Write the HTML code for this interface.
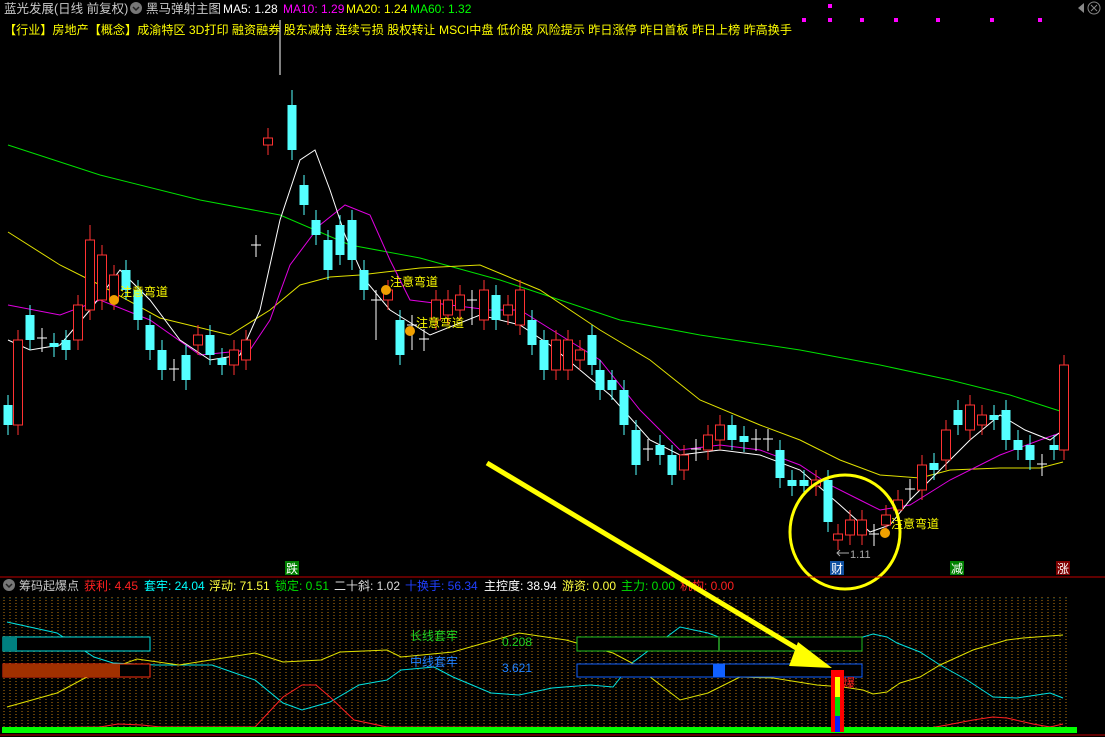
<!DOCTYPE html>
<html><head><meta charset="utf-8"><style>
body{margin:0;background:#000;width:1105px;height:737px;overflow:hidden;font-family:"Liberation Sans","Noto Sans CJK SC",sans-serif}
svg{display:block}
text{font-family:"Liberation Sans","Noto Sans CJK SC",sans-serif}
</style></head><body>
<svg id="s" width="1105" height="737" xmlns="http://www.w3.org/2000/svg">
<defs><clipPath id="cp"><rect x="0" y="597" width="1080" height="131"/></clipPath></defs>
<rect width="1105" height="737" fill="#000"/>
<text x="4" y="13" font-size="12.5" fill="#c8c8c8">蓝光发展(日线 前复权)</text>
<circle cx="136" cy="8" r="6" fill="#777"/><path d="M133 7l3 3 3-3" stroke="#222" stroke-width="1.5" fill="none"/>
<text x="146" y="13" font-size="12.5" fill="#c8c8c8">黑马弹射主图</text>
<text x="223" y="13" font-size="12" fill="#fff">MA5: 1.28</text>
<text x="283" y="13" font-size="12" fill="#ff00ff">MA10: 1.29</text>
<text x="346" y="13" font-size="12" fill="#ffff00">MA20: 1.24</text>
<text x="410" y="13" font-size="12" fill="#00ff00">MA60: 1.32</text>
<text x="4" y="34" font-size="12" fill="#ffff00" textLength="788" lengthAdjust="spacingAndGlyphs">【行业】房地产【概念】成渝特区 3D打印 融资融券 股东减持 连续亏损 股权转让 MSCI中盘 低价股 风险提示 昨日涨停 昨日首板 昨日上榜 昨高换手</text>
<g fill="#ff00ff"><rect x="802" y="18" width="4" height="4"/><rect x="828" y="18" width="4" height="4"/><rect x="860" y="18" width="4" height="4"/><rect x="894" y="18" width="4" height="4"/><rect x="936" y="18" width="4" height="4"/><rect x="990" y="18" width="4" height="4"/><rect x="1038" y="18" width="4" height="4"/><rect x="828" y="4" width="4" height="4"/></g>
<path d="M1078 8l6-5v10z" fill="#888"/><circle cx="1094" cy="8" r="6" fill="none" stroke="#888"/><path d="M1091 5l6 6M1097 5l-6 6" stroke="#888"/>
<polyline fill="none" stroke="#00e000" stroke-width="1" points="8,145 100,175 200,200 280,215 350,245 420,258 500,280 560,300 620,320 700,335 800,350 880,365 950,380 1010,395 1063,412"/>
<polyline fill="none" stroke="#e0e000" stroke-width="1" points="8,232 60,265 100,285 160,318 230,335 270,310 300,285 330,277 360,275 420,268 480,265 540,290 600,330 650,360 700,400 760,425 800,440 840,460 880,475 920,478 950,470 1000,468 1040,468 1063,462"/>
<polyline fill="none" stroke="#e000e0" stroke-width="1" points="8,305 60,315 100,300 150,320 200,355 250,350 270,320 290,265 320,225 345,205 370,215 390,260 410,300 450,305 490,310 520,310 560,335 600,360 640,410 680,450 720,445 760,450 800,465 830,485 860,500 880,510 910,505 950,480 1000,455 1040,440 1063,432"/>
<polyline fill="none" stroke="#fff" stroke-width="1" points="8,340 30,350 60,345 90,310 120,270 150,300 180,340 210,360 240,355 260,310 280,220 300,160 315,150 330,190 345,235 365,280 390,310 430,335 480,315 520,325 550,345 580,370 610,395 650,440 680,455 720,450 760,455 800,470 840,505 870,532 890,525 910,500 940,470 970,440 1000,415 1025,430 1050,440 1063,430"/>
<g id="candles"></g>
<g font-size="12" fill="#ffff00">
<circle cx="114" cy="300" r="5" fill="#f0a000"/><text x="120" y="296">注意弯道</text>
<circle cx="386" cy="290" r="5" fill="#f0a000"/><text x="390" y="286">注意弯道</text>
<circle cx="410" cy="331" r="5" fill="#f0a000"/><text x="416" y="327">注意弯道</text>
<circle cx="885" cy="533" r="5" fill="#f0a000"/><text x="891" y="528">注意弯道</text>
</g>
<path d="M837 553h12" stroke="#aaa"/><path d="M840 550l-3 3 3 3" stroke="#aaa" fill="none"/><text x="850" y="558" font-size="11" fill="#aaa">1.11</text>
<ellipse cx="845" cy="532" rx="55" ry="57" fill="none" stroke="#ffff00" stroke-width="3"/>
<rect x="285" y="561" width="14" height="14" fill="#008000"/><text x="286" y="573" font-size="12" fill="#fff">跌</text>
<rect x="830" y="561" width="14" height="14" fill="#1050a0"/><text x="831" y="573" font-size="12" fill="#fff">财</text>
<rect x="950" y="561" width="14" height="14" fill="#008000"/><text x="951" y="573" font-size="12" fill="#fff">减</text>
<rect x="1056" y="561" width="14" height="14" fill="#800000"/><text x="1057" y="573" font-size="12" fill="#fff">涨</text>
<line x1="0" y1="577" x2="1105" y2="577" stroke="#c00000"/>
<line x1="0" y1="735" x2="1105" y2="735" stroke="#c00000"/>
<circle cx="9" cy="585" r="6" fill="#777"/><path d="M6 584l3 3 3-3" stroke="#222" stroke-width="1.5" fill="none"/>
<g font-size="12">
<text x="19" y="590" fill="#c8c8c8">筹码起爆点</text>
<text x="84" y="590" fill="#ff2020">获利: 4.45</text>
<text x="144" y="590" fill="#00ffff">套牢: 24.04</text>
<text x="209" y="590" fill="#ffff40">浮动: 71.51</text>
<text x="275" y="590" fill="#00e000">锁定: 0.51</text>
<text x="334" y="590" fill="#ddd">二十斜: 1.02</text>
<text x="405" y="590" fill="#2040ff">十换手: 56.34</text>
<text x="484" y="590" fill="#fff">主控度: 38.94</text>
<text x="562" y="590" fill="#ffff40">游资: 0.00</text>
<text x="621" y="590" fill="#00e000">主力: 0.00</text>
<text x="680" y="590" fill="#ff2020">机构: 0.00</text>
</g>
<g id="bars" clip-path="url(#cp)"></g>
<polyline fill="none" stroke="#00e0e0" points="7,622 57,633 94,657 113,663 156,665 212,665 255,680 283,703 302,710 330,702 359,685 387,680 401,670 434,667 453,677 491,693 519,695 552,688 590,685 613,687 632,663 680,627 708,633 740,645 863,637 873,634 887,637 897,643 920,652 940,665 967,680 993,697 1017,698 1050,693 1063,698"/>
<polyline fill="none" stroke="#e0e000" points="7,707 57,693 85,678 137,659 179,665 255,653 283,662 321,660 340,652 387,650 401,657 453,652 519,633 566,640 613,653 632,663 680,700 708,693 740,677 773,678 817,685 843,687 863,690 873,694 887,692 900,683 920,677 940,665 973,650 1007,640 1023,638 1063,635"/>
<polyline fill="none" stroke="#ff2020" points="7,728 100,727 118,724 142,725 160,727 255,727 283,697 302,685 316,685 330,697 354,720 387,727 930,728 947,725 973,720 993,717 1007,718 1033,724 1050,727 1063,724"/>
<rect x="2" y="727" width="1075" height="6" fill="#00ff00"/>
<rect x="3" y="637" width="147" height="14" fill="#000" stroke="#00e0e0"/><rect x="3" y="637" width="14" height="14" fill="#008080"/>
<rect x="3" y="664" width="147" height="13" fill="#000" stroke="#ff3010"/><rect x="3" y="664" width="117" height="13" fill="#a03000"/>
<rect x="577" y="637" width="285" height="14" fill="#000" stroke="#20c020"/><rect x="718" y="637" width="2" height="14" fill="#208020"/>
<rect x="577" y="664" width="285" height="13" fill="#000" stroke="#1060ff"/><rect x="713" y="664" width="12" height="13" fill="#1060ff"/>
<text x="410" y="640" font-size="12" fill="#20d020">长线套牢</text><text x="502" y="646" font-size="12" fill="#20d020">0.208</text>
<text x="410" y="666" font-size="12" fill="#2080ff">中线套牢</text><text x="502" y="672" font-size="12" fill="#2080ff">3.621</text>
<rect x="831" y="670" width="13" height="62" fill="#ff0000"/><rect x="835" y="677" width="5" height="20" fill="#ffff00"/><rect x="835" y="697" width="5" height="20" fill="#00e000"/><rect x="835" y="716" width="5" height="16" fill="#0020ff"/>
<text x="843" y="687" font-size="12" fill="#ff2020">爆</text>
<line x1="487" y1="463" x2="808" y2="655" stroke="#ffff00" stroke-width="5"/>
<path d="M798 642l34 26-43 -2z" fill="#ffff00"/>
<line x1="280" y1="20" x2="280" y2="75" stroke="#fff"/>
</svg>
<script>
var C=[[8,405,425,'c'],[18,340,425,'r',330],[30,315,340,'c'],[42,338,342,'w'],[54,343,347,'c'],[66,340,350,'c'],[78,305,340,'r'],[90,240,310,'r',225],[102,255,300,'r'],[114,275,300,'r'],[126,270,290,'c'],[138,290,320,'c'],[150,325,350,'c'],[162,350,370,'c'],[174,369,371,'w'],[186,355,380,'c'],[198,335,345,'r'],[210,335,355,'c'],[222,358,365,'c'],[234,350,365,'r'],[246,340,360,'r'],[256,245,247,'w'],[268,138,145,'r'],[292,105,150,'c',90],[304,185,205,'c'],[316,220,235,'c'],[328,240,270,'c'],[340,225,255,'c'],[352,220,260,'c'],[364,270,290,'c'],[376,300,330,'w'],[388,290,300,'r'],[400,320,355,'c'],[412,325,340,'w'],[424,339,341,'w'],[436,300,320,'r'],[448,300,315,'r'],[460,295,310,'r'],[472,300,315,'w'],[484,290,320,'r'],[496,295,320,'c'],[508,305,315,'r'],[520,290,325,'r'],[532,320,345,'c'],[544,340,370,'c'],[556,340,370,'r'],[568,340,370,'r'],[580,350,360,'r'],[592,335,365,'c'],[600,370,390,'c'],[612,380,390,'c'],[624,390,425,'c'],[636,430,465,'c'],[648,449,451,'w'],[660,445,455,'c'],[672,455,475,'c'],[684,455,470,'r'],[696,449,451,'w'],[708,435,450,'r'],[720,425,440,'r'],[732,425,440,'c'],[744,436,442,'c'],[756,439,441,'w'],[768,439,441,'w'],[780,450,478,'c'],[792,480,486,'c'],[804,480,486,'c'],[816,480,486,'r'],[828,480,522,'c'],[838,534,540,'r'],[850,520,535,'r'],[862,520,535,'r'],[874,534,536,'w'],[886,515,525,'r'],[898,500,510,'r'],[910,489,491,'w'],[922,465,490,'r'],[934,463,470,'c'],[946,430,460,'r'],[958,410,425,'c'],[970,405,430,'r'],[982,415,425,'r'],[994,415,420,'c'],[1006,410,440,'c'],[1018,440,450,'c'],[1030,445,460,'c'],[1042,464,466,'w'],[1054,445,450,'c'],[1064,365,450,'r']];
var g=document.getElementById('candles'),h='';
C.forEach(function(c){var x=c[0],t=c[1],b=c[2],k=c[3],hi=c[4]||t-10,lo=b+10;
var col=k=='c'?'#54ffff':k=='r'?'#ff3232':'#fff';
h+='<line x1="'+x+'" y1="'+hi+'" x2="'+x+'" y2="'+lo+'" stroke="'+col+'"/>';
if(k=='c')h+='<rect x="'+(x-4.5)+'" y="'+t+'" width="9" height="'+(b-t)+'" fill="'+col+'"/>';
else if(k=='r')h+='<rect x="'+(x-4.5)+'" y="'+t+'" width="9" height="'+(b-t)+'" fill="#000" stroke="'+col+'"/>';
else h+='<line x1="'+(x-5)+'" y1="'+t+'" x2="'+(x+5)+'" y2="'+t+'" stroke="#fff"/>';});
g.innerHTML=h;
var Y=[[7,707],[85,678],[137,659],[255,653],[340,652],[453,652],[519,633],[613,653],[680,700],[740,677],[863,690],[920,677],[973,650],[1063,635]];
function yl(x){for(var i=1;i<Y.length;i++){if(x<=Y[i][0]){var a=Y[i-1],b=Y[i];return a[1]+(b[1]-a[1])*(x-a[0])/(b[0]-a[0]);}}return 635;}
var B=document.getElementById('bars'),s='';
for(var x=4;x<1068;x+=6){var top=yl(x)-6;var d=Math.abs(x-300);if(d<60)top-=(60-d)*0.6;
if(x>640&&x<830)top=yl(x)+10;top=Math.max(600,Math.round(top));
s+='<line x1="'+x+'" y1="599" x2="'+x+'" y2="'+top+'" stroke="#0c4a4a" stroke-dasharray="1 2"/>';
s+='<line x1="'+x+'" y1="'+top+'" x2="'+x+'" y2="727" stroke="#c07a10" stroke-dasharray="1 2"/>';}
B.innerHTML=s;
</script>
</body></html>
